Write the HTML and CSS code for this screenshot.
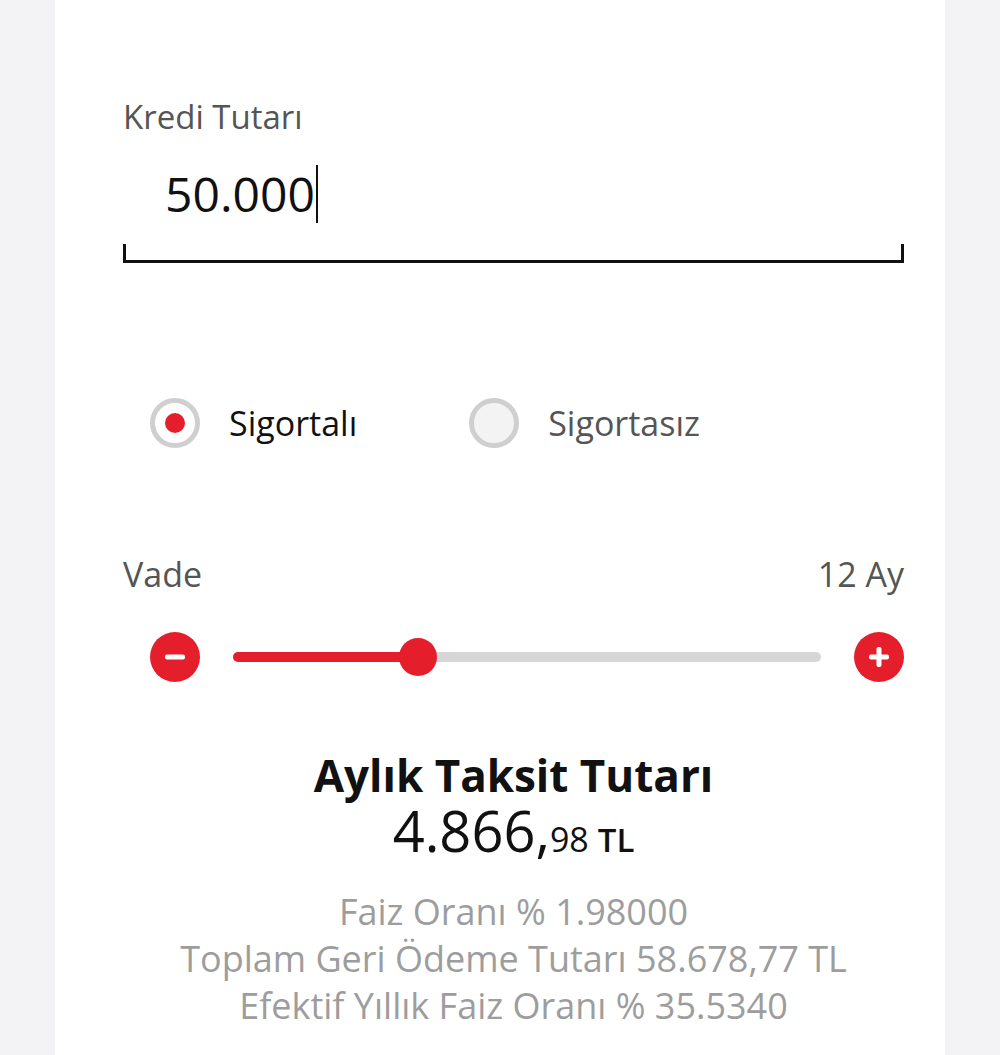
FILE: index.html
```html
<!DOCTYPE html>
<html lang="tr">
<head>
<meta charset="utf-8">
<link rel="stylesheet" href="styles.css">
</head>
<body>
<main class="card">
  <section class="amount">
    <div class="label">Kredi Tutarı</div>
    <div class="input-row"><span class="value">50.000</span><span class="caret"></span></div>
    <div class="underline"></div>
  </section>

  <section class="radios">
    <label class="radio checked"><span class="dot"></span><span class="rtext">Sigortalı</span></label>
    <label class="radio"><span class="dot"></span><span class="rtext">Sigortasız</span></label>
  </section>

  <section class="term">
    <div class="term-head"><span>Vade</span><span>12 Ay</span></div>
    <div class="slider-row">
      <span class="btn">
        <svg viewBox="0 0 50 50" width="50" height="50"><circle cx="25" cy="25" r="25" fill="#e41e2b"/><rect x="15" y="22.5" width="20" height="5" rx="2" fill="#fff"/></svg>
      </span>
      <div class="track"><div class="fill" style="width:31.5%"></div><span class="thumb" style="left:31.5%"></span></div>
      <span class="btn">
        <svg viewBox="0 0 50 50" width="50" height="50"><circle cx="25" cy="25" r="25" fill="#e41e2b"/><rect x="15" y="22.5" width="20" height="5" rx="2" fill="#fff"/><rect x="22.5" y="15" width="5" height="20" rx="2" fill="#fff"/></svg>
      </span>
    </div>
  </section>

  <section class="summary">
    <h2 class="title">Aylık Taksit Tutarı</h2>
    <div class="total"><span class="big">4.866,</span><span class="cents">98</span><span class="cur">TL</span></div>
    <div class="details">
      <p>Faiz Oranı % 1.98000</p>
      <p>Toplam Geri Ödeme Tutarı 58.678,77 TL</p>
      <p>Efektif Yıllık Faiz Oranı % 35.5340</p>
    </div>
  </section>
</main>
</body>
</html>
```

FILE: styles.css
```css
html, body {
  margin: 0;
  padding: 0;
  background: #f3f3f5;
  font-family: "Open Sans", "Noto Sans", sans-serif;
}
.card {
  margin-left: 55px;
  width: 890px;
  height: 1055px;
  box-sizing: border-box;
  background: #fff;
  padding: 98px 41px 0 68px;
  overflow: hidden;
}
.label {
  font-size: 33px;
  line-height: 38px;
  color: #555;
}
.input-row {
  display: flex;
  align-items: center;
  height: 62px;
  margin-top: 27px;
  padding-left: 42px;
}
.value {
  font-size: 48px;
  line-height: 62px;
  color: #111;
}
.caret {
  display: inline-block;
  width: 2px;
  height: 58px;
  background: #111;
  margin-left: 1px;
}
.underline {
  margin-top: 19px;
  height: 16px;
  border: 3px solid #111;
  border-top: none;
}
.radios {
  display: flex;
  margin-top: 135px;
  padding-left: 27px;
  gap: 112px;
}
.radio {
  display: flex;
  align-items: center;
  gap: 29px;
}
.dot {
  width: 40px;
  height: 40px;
  border-radius: 50%;
  border: 5px solid #cfcfcf;
  background: #f3f3f3;
  box-sizing: content-box;
  display: flex;
  align-items: center;
  justify-content: center;
}
.radio.checked .dot {
  background: #fff;
}
.radio.checked .dot::after {
  content: "";
  width: 20px;
  height: 20px;
  border-radius: 50%;
  background: #e41e2b;
}
.rtext {
  font-size: 34px;
  color: #555;
}
.radio.checked .rtext {
  color: #111;
}
.term {
  margin-top: 106px;
}
.term-head {
  display: flex;
  justify-content: space-between;
  font-size: 34px;
  line-height: 40px;
  color: #555;
}
.slider-row {
  display: flex;
  align-items: center;
  margin-top: 38px;
  padding-left: 27px;
}
.btn {
  display: block;
  width: 50px;
  height: 50px;
}
.btn svg { display: block; }
.track {
  position: relative;
  flex: 1;
  height: 10px;
  border-radius: 5px;
  background: #d6d6d6;
  margin: 0 33px 0 33px;
}
.fill {
  height: 100%;
  border-radius: 5px;
  background: #e41e2b;
}
.thumb {
  position: absolute;
  top: 50%;
  width: 38px;
  height: 38px;
  border-radius: 50%;
  background: #e41e2b;
  transform: translate(-50%, -50%);
}
.summary {
  margin-top: 68px;
  text-align: center;
}
.title {
  margin: 0;
  font-size: 44px;
  line-height: 50px;
  font-weight: 700;
  color: #111;
}
.total {
  color: #111;
  line-height: 60px;
}
.big {
  font-size: 56px;
}
.cents {
  font-size: 34px;
}
.cur {
  font-size: 33px;
  font-weight: 600;
  margin-left: 9px;
}
.details {
  margin-top: 12px;
  color: #9d9d9d;
  font-size: 36px;
  line-height: 47px;
}
.details p {
  margin: 0;
}
```
